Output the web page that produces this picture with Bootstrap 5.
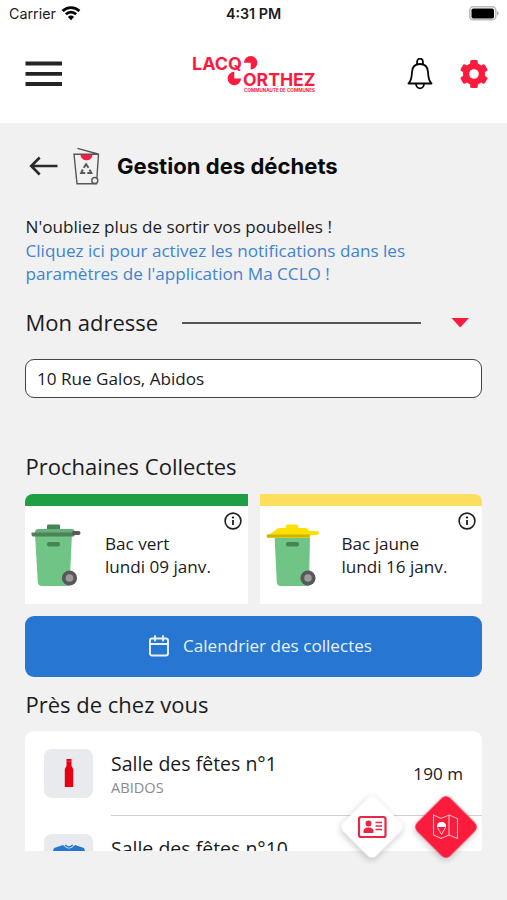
<!DOCTYPE html>
<html lang="fr">
<head>
<meta charset="utf-8">
<meta name="viewport" content="width=device-width, initial-scale=1">
<title>Gestion des déchets</title>
<link href="https://cdn.jsdelivr.net/npm/bootstrap@5.3.0/dist/css/bootstrap.min.css" rel="stylesheet">
<style>
body{font-family:"Open Sans","Noto Sans",sans-serif;color:#1b1b1d;background:#f1f1f1;font-size:17.120px;line-height:23.600px}
.phone{width:507px;height:900px}
svg{display:block;flex-shrink:0}
.statusbar{height:28px;font:15px/28px Inter,sans-serif;padding:0 7px 0 9px}
.statusbar .carrier{font-size:14.300px}
.statusbar .clock{font-weight:600;font-size:14.300px}
.appbar{height:95px;padding:0 18px 3px 25px}
.content{padding:0 25px}
.titlebar{height:50px;margin-top:18px;padding-left:4px}
.titlebar h1{font:700 22.100px/30px Inter,sans-serif;color:#0b0b0c;margin-left:17px}
.intro{margin-top:24px;padding-left:.5px}
.blue-link{color:#4083d0;text-decoration:none}
.section-title{font-size:22px;line-height:28px;padding-bottom:2px;font-weight:400;padding-left:.5px}
.rule{height:2px;background:#555;width:239px}
.address{height:39px;border:1.5px solid #444;border-radius:9px;font-size:17.120px;padding:0 11px;color:#1b1b1d;background:#fff}
.bins{gap:12px;margin-top:12px}
.bin{flex:1 1 0;height:110px;background:#fff;border-top:12px solid #1f9e43;border-radius:8px 0 0 0}
.bin.yellow{border-color:#fddf5d;border-radius:0 8px 0 0}
.bin .when{margin:26px 0 0 24px}
.bin.yellow .when{margin-left:22px}
.bin .info{right:6px;top:6px}
.btn-calendar{height:61px;border-radius:9px;background:#2676d2;color:#e8f2fd;font-size:17.120px;gap:14px;margin-top:12px;padding-left:26px}
.btn-calendar:hover{background:#2676d2;color:#fff}
.nearby{height:120px;border-radius:9px 9px 0 0;background:#fff;margin-top:11px;padding-left:19px}
.place{height:85px;padding-top:18px}
.thumb{width:49px;height:49px;border-radius:8px;background:#e8eaed;flex-shrink:0}
.place-body{margin-left:18px;height:67px;border-bottom:1px solid #d0d0d0;padding-right:19px}
.place-name{font-size:19.500px;line-height:29px}
.town{font-size:14.600px;line-height:18px;color:#8a8a8a}
.fab-left{left:335px;top:790px}
.fab-right{left:408px;top:790px}
.fab-shadow{filter:drop-shadow(1px 2px 3px rgba(0,0,0,.22))}
</style>
</head>
<body>
<div class="phone position-relative overflow-hidden">
<header class="bg-white">
  <div class="statusbar d-flex align-items-center justify-content-between position-relative">
    <div class="d-flex align-items-center"><span class="carrier">Carrier</span>
      <svg class="ms-1" style="margin-top:-2px" width="22" height="16" viewBox="0 0 22 16"><g fill="none" stroke="#050505" stroke-width="2.8"><path d="M2.600 6A12 12 0 0 1 19.400 6"/><path d="M5.900 9.300A7.200 7.200 0 0 1 16.100 9.300"/></g><path d="M11 15.200l-3.100-3.300a4.400 4.400 0 0 1 6.200 0z"/></svg>
    </div>
    <span class="clock position-absolute start-50 translate-middle-x">4:31 PM</span>
    <svg style="margin-top:-2px" width="31" height="15" viewBox="0 0 31 15"><rect x=".8" y=".8" width="26" height="13" rx="3.500" fill="#fff" stroke="#bcbcbc" stroke-width="1.600"/><rect x="2.500" y="2.500" width="22.500" height="10" rx="1.800"/><path d="M28 5l2 2.300-2 2.200z" fill="#aaa"/></svg>
  </div>
  <div class="appbar d-flex align-items-center justify-content-between position-relative">
    <svg width="38" height="28" viewBox="0 0 38 28"><path d="M.5 3.500h36.500M.5 13.800h36.500M.5 24h36.500" stroke="#242426" stroke-width="3.800"/></svg>
    <svg class="position-absolute start-50 translate-middle-x" style="margin-top:2px" width="126" height="42" viewBox="0 0 126 42" fill="#fb1b40" font-family="Inter,sans-serif">
      <text x="1" y="15.700" font-size="17.500" font-weight="700" textLength="50" lengthAdjust="spacingAndGlyphs">LACQ</text>
      <path d="M53 8.800A6.700 6.700 0 1 1 59.700 15.500V8.800z"/>
      <path d="M43.300 17.800V24.500H50A6.700 6.700 0 1 1 43.300 17.800z"/>
      <text x="52" y="31.500" font-size="17.500" font-weight="700" textLength="72.500" lengthAdjust="spacingAndGlyphs">ORTHEZ</text>
      <text x="53" y="38" font-size="4.600" font-weight="700" textLength="71" lengthAdjust="spacingAndGlyphs">COMMUNAUTÉ DE COMMUNES</text>
    </svg>
    <div class="d-flex align-items-center">
      <svg width="26" height="32" viewBox="0 0 26 32" fill="none" stroke="#080808" stroke-width="1.800" stroke-linejoin="round"><path d="M10.100 6.400V3.600a2.900 2.900 0 0 1 5.800 0v2.800"/><path d="M1.500 25.500c3.300-3.400 3.200-7 3.500-11.500C5.300 9 8 6 13 6s7.700 3 8 8c.3 4.500.2 8.100 3.500 11.500z"/><path d="M9 25.800a4 4.500 0 0 0 8 0"/></svg>
      <svg style="margin-left:26px" width="30" height="30" viewBox="0 0 30 30"><g fill="#fb1b3c"><circle cx="15" cy="15" r="11"/><rect x="11.200" y="1" width="7.600" height="28" rx="1.500"/><rect x="11.200" y="1" width="7.600" height="28" rx="1.500" transform="rotate(60 15 15)"/><rect x="11.200" y="1" width="7.600" height="28" rx="1.500" transform="rotate(120 15 15)"/></g><circle cx="15" cy="15" r="4.800" fill="#fff"/></svg>
    </div>
  </div>
</header>

<main class="content">
  <div class="titlebar d-flex align-items-center">
    <svg width="29" height="20" viewBox="0 0 29 20" fill="none" stroke="#2a2a2c" stroke-width="2.600"><path d="M28.500 10H3M10.700 1.500L2.200 10l8.500 8.500"/></svg>
    <svg style="margin-left:15px" width="27" height="38" viewBox="0 0 27 38" fill="none" stroke="#55575a" stroke-width="1.400"><path d="M4.500 1.300L25 7M1 7.200h24.500l-2 29.600H4z"/><path d="M7.500 7.700h12c-.5 7.300-11.500 7.300-12 0z" fill="#fb1b3c" stroke="none"/><g stroke-width="2"><path d="M10.700 20.800l2.400-3.500 2.400 3.500M9.800 22.500l-1.600 3.400h4M14.300 25.900h4l-1.700-3.200"/></g><circle cx="21.800" cy="33.500" r="3" fill="#f1f1f1"/></svg>
    <h1 class="mb-0">Gestion des déchets</h1>
  </div>
  <p class="intro mb-0">N'oubliez plus de sortir vos poubelles !<br><a href="#" class="blue-link">Cliquez ici pour activez les notifications dans les<br>paramètres de l'application Ma CCLO !</a></p>
  <div class="d-flex align-items-center" style="margin-top:22px">
    <h2 class="section-title mb-0">Mon adresse</h2>
    <div class="rule ms-auto" style="margin-right:25px"></div>
    <svg class="me-2" style="margin-top:1px" width="28" height="10" viewBox="0 0 28 10"><path d="M5.500 0h17.500L14.200 9.500z" fill="#fb1b3c"/></svg>
  </div>
  <input class="address form-control" style="margin-top:21px" value="10 Rue Galos, Abidos" aria-label="Adresse">
  <h2 class="section-title mb-0" style="margin-top:54px">Prochaines Collectes</h2>
  <div class="bins d-flex">
    <section class="bin d-flex position-relative">
      <svg style="margin:18px 0 0 6px" width="50" height="62" viewBox="0 0 50 62"><path d="M4 10h37l-2.500 52H11q-4 0-4.200-4z" fill="#6fc486"/><path d="M16 5V1.500Q16 .5 17 .5h11q1 0 1 1V5z" fill="#468454"/><path d="M7 5h34q3 0 3 4H4q0-4 3-4z" fill="#63b277"/><path d="M.5 8.500h43v3q0 1-1 1H2Q.5 12.500.5 10z" fill="#4d815a"/><rect x="41" y="7" width="8.500" height="4" rx="2" fill="#59595a"/><rect x="16" y="18" width="13" height="4.500" rx="2" fill="#468454"/><circle cx="38.500" cy="54" r="7.600" fill="#58585a"/><circle cx="38.500" cy="54" r="3.800" fill="#9b9b9b"/></svg>
      <div class="when">Bac vert<br>lundi 09 janv.</div>
      <svg class="info position-absolute" width="18" height="18" viewBox="0 0 18 18"><circle cx="9" cy="9" r="7.900" fill="none" stroke="#222" stroke-width="1.600"/><path d="M9 8v5" stroke="#222" stroke-width="1.800"/><circle cx="9" cy="5.500" r="1.100"/></svg>
    </section>
    <section class="bin yellow d-flex position-relative">
      <svg style="margin:18px 0 0 6px" width="54" height="62" viewBox="0 0 54 62"><path d="M8.500 11h35.500l-1 51H15q-4 0-4.200-4z" fill="#6fc486"/><path d="M10 6q1-2 4-2h6V2q0-1.500 1.500-1.500h9Q32 .5 32 2v2h7q3 0 4 3h8q2 0 2 2t-2 2h-6l-2 3H1q-1-2 1-3z" fill="#fee000"/><path d="M1 10.500h43l-1.500 3H2q-2 0-1-3z" fill="#cbb50c"/><rect x="20" y="18" width="13" height="4.500" rx="2" fill="#468454"/><circle cx="42" cy="54" r="7.600" fill="#58585a"/><circle cx="42" cy="54" r="3.800" fill="#9b9b9b"/></svg>
      <div class="when">Bac jaune<br>lundi 16 janv.</div>
      <svg class="info position-absolute" width="18" height="18" viewBox="0 0 18 18"><circle cx="9" cy="9" r="7.900" fill="none" stroke="#222" stroke-width="1.600"/><path d="M9 8v5" stroke="#222" stroke-width="1.800"/><circle cx="9" cy="5.500" r="1.100"/></svg>
    </section>
  </div>
  <a href="#" class="btn btn-calendar w-100 d-flex align-items-center justify-content-center">
    <svg width="20" height="22" viewBox="0 0 20 22" fill="none" stroke="#e8f2fd" stroke-width="1.900" stroke-linecap="round"><rect x="1" y="3.500" width="18" height="17" rx="2"/><path d="M1 9h18M6 1v4.500M14 1v4.500"/></svg>
    <span>Calendrier des collectes</span>
  </a>
  <h2 class="section-title mb-0" style="margin-top:13px">Près de chez vous</h2>
  <div class="nearby overflow-hidden">
    <div class="place d-flex">
      <div class="thumb d-flex align-items-center justify-content-center"><svg width="10" height="30" viewBox="0 0 10 30"><path d="M2.500 1h5v7L9.200 11v18H.8V11L2.500 8z" fill="#e60012"/><path d="M2.500 3.200h5" stroke="#ef6872" stroke-width=".6"/></svg></div>
      <div class="place-body d-flex flex-fill justify-content-between">
        <div><div class="place-name">Salle des fêtes n°1</div><div class="town">ABIDOS</div></div>
        <div style="padding-top:13px">190 m</div>
      </div>
    </div>
    <div class="place d-flex">
      <div class="thumb d-flex justify-content-center"><svg style="margin-top:10px" width="34" height="30" viewBox="0 0 34 30"><path d="M11 1L2 4 0 10l7 2v17h20V12l7-2-2-6-9-3q-6 7-12 0z" fill="#2676d2"/><path d="M13.200 1q3.800 4 7.600 0" fill="none" stroke="#2676d2" stroke-width="1.300"/></svg></div>
      <div class="place-body flex-fill"><div class="place-name">Salle des fêtes n°10</div></div>
    </div>
  </div>
</main>

<a href="#" class="fab-left position-absolute" aria-label="Carte">
  <svg width="74" height="74" viewBox="0 0 74 74"><rect class="fab-shadow" x="13.500" y="13.500" width="47" height="47" rx="6" transform="rotate(45 37 37)" fill="#fff"/><rect x="24" y="27" width="26.500" height="20" rx="2" fill="#fff" stroke="#e62644" stroke-width="2.200"/><g fill="#e62644"><circle cx="33.500" cy="33.500" r="3"/><path d="M28.500 43v-1.800q0-3.700 5-3.700t5 3.700V43z"/></g><path d="M40.500 32.500h6.500M40.500 36h6.500M40.500 39.500h6.500" stroke="#e62644" stroke-width="1.300"/></svg>
</a>
<a href="#" class="fab-right position-absolute" aria-label="Plan">
  <svg width="76" height="74" viewBox="0 0 76 74"><rect class="fab-shadow" x="14.500" y="13.500" width="47" height="47" rx="6" transform="rotate(45 38 37)" fill="#fb1b3c"/><g fill="none" stroke="#ffb8c2" stroke-width="1.100"><path d="M25.500 25l7.500 3.500 8-3.500 8.500 3.500v20L41 45l-8 3.500-7.500-3.500zM41 25v20"/></g><path d="M33.500 44.500l-4-7q-.5-5 4-5t4 5z" fill="#fb1b3c" stroke="#ffd3d9"/><path d="M29 37q0-5 4.500-5t4.500 5z" fill="#fff"/></svg>
</a>
</div>
<script src="https://cdn.jsdelivr.net/npm/bootstrap@5.3.0/dist/js/bootstrap.bundle.min.js"></script>
</body>
</html>
